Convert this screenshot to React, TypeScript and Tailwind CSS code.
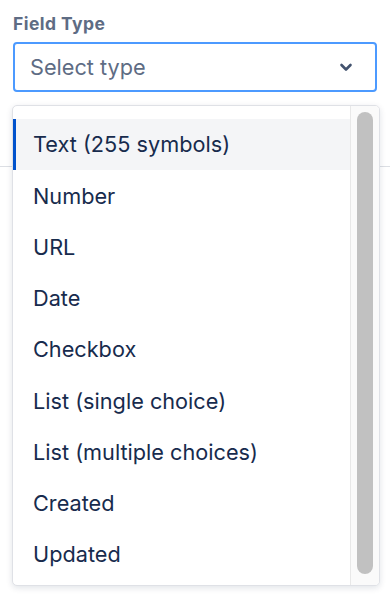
import React from "react";

const options = [
  "Text (255 symbols)",
  "Number",
  "URL",
  "Date",
  "Checkbox",
  "List (single choice)",
  "List (multiple choices)",
  "Created",
  "Updated",
];

const App: React.FC = () => {
  const selected = 0;

  return (
    <div
      className="relative h-[600px] w-[390px] bg-white"
      style={{ fontFamily: "Inter, 'Noto Sans', sans-serif" }}
    >
      <div className="px-[13px] pt-[12px]">
        <label className="block text-[17.5px] font-bold leading-[24px] tracking-[0.45px] text-[#5e6c84]">
          Field Type
        </label>
        <div className="mt-[6px] flex h-[50px] items-center justify-between rounded-[4px] border-2 border-[#4c9aff] bg-white pl-[15px] pr-[22px]">
          <span className="text-[21.7px] text-[#5e6c84]">Select type</span>
          <svg width="14" height="10" viewBox="0 0 14 10" fill="none">
            <path
              d="M2.5 3l4.5 4.5L11.5 3"
              stroke="#42526e"
              strokeWidth="2.6"
              strokeLinecap="round"
              strokeLinejoin="round"
            />
          </svg>
        </div>
      </div>
      <div className="mt-[74px] border-t border-[#dcdfe4]" />

      {/* dropdown menu */}
      <div className="absolute left-[12px] top-[105px] flex h-[481px] w-[368px] overflow-hidden rounded-[5px] border border-[#dfe1e6] bg-white shadow-[0_2px_6px_rgba(9,30,66,0.12)]">
        <ul className="flex-1 pt-[13px]">
          {options.map((o, i) => (
            <li
              key={o}
              className={
                i === selected
                  ? "flex h-[51.25px] items-center border-l-[3px] border-[#0052cc] bg-[#f4f5f7] pl-[17px] text-[21.7px] text-[#172b4d]"
                  : "flex h-[51.25px] items-center pl-[20px] text-[21.7px] text-[#172b4d]"
              }
            >
              {o}
            </li>
          ))}
        </ul>
        <div className="flex w-[29px] border-l border-[#e8e8e8] bg-[#fafafa] pb-[11px] pl-[6px] pt-[6px]">
          <div className="w-[16px] rounded-full bg-[#c1c1c1]" />
        </div>
      </div>
    </div>
  );
};

export default App;
